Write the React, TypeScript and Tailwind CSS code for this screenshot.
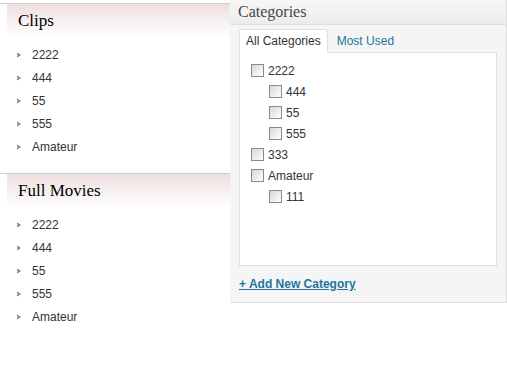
import React from "react";

const items = ["2222", "444", "55", "555", "Amateur"];

function Bullet() {
  return (
    <svg width="5" height="6" viewBox="0 0 5 6" className="shrink-0">
      <path d="M0 0.5 L4 3 L0 5.5 Z" fill="#7a7a7a" />
      <path d="M0 2 L1.6 3 L0 4 Z" fill="#d6d6d6" />
    </svg>
  );
}

function Section({ title, first }: { title: string; first?: boolean }) {
  return (
    <div className={first ? "mt-[3px] border-t border-[#cfcfcf]" : "border-t border-[#cfcfcf]"}>
      <div className="ml-[7px] h-[33px] flex items-center pl-[11px] bg-gradient-to-b from-[#eedfdf] to-[#ffffff] text-[17px] text-black" style={{ fontFamily: '"Liberation Serif", serif' }}>
        {title}
      </div>
      <ul className="pt-[6px] pb-[15px]">
        {items.map((t) => (
          <li key={t} className="h-[23px] flex items-center pl-[17px]">
            <Bullet />
            <span className="ml-[10px] text-[12px] text-[#333]">{t}</span>
          </li>
        ))}
      </ul>
    </div>
  );
}

function Check({ label, indent }: { label: string; indent?: boolean }) {
  return (
    <div className={"h-[21px] flex items-center " + (indent ? "pl-[29px]" : "pl-[11px]")}>
      <span className="w-[13px] h-[13px] border border-[#8a8a8a] bg-gradient-to-br from-[#d8d8d8] to-[#ffffff] shrink-0" />
      <span className="ml-[4px] text-[12px] text-[#333]">{label}</span>
    </div>
  );
}

export default function App() {
  return (
    <div className="w-[507px] h-[379px] bg-white flex items-start" style={{ fontFamily: '"Liberation Sans", Arial, sans-serif' }}>
      <div className="w-[230px] shrink-0">
        <Section title="Clips" first />
        <Section title="Full Movies" />
      </div>
      <div className="w-[277px] h-[303px] bg-[#f5f5f5] border-b border-r border-[#dfdfdf]">
        <div className="h-[25px] border-b border-[#dfdfdf] bg-gradient-to-b from-[#f7f7f7] to-[#ececec] flex items-center pl-[8px] text-[16px] text-[#464646]" style={{ fontFamily: '"Liberation Serif", serif' }}>
          Categories
        </div>
        <div className="pl-[9px] pr-[9px] pt-[4px]">
          <div className="flex items-end">
            <div className="h-[24px] px-[6px] flex items-center bg-white border border-[#dfdfdf] border-b-white rounded-t-[3px] -mb-px relative z-10 text-[12px] text-[#333]">
              All Categories
            </div>
            <div className="h-[23px] ml-[3px] px-[6px] flex items-center text-[12px] text-[#21759b]">Most Used</div>
          </div>
          <div className="h-[214px] bg-white border border-[#dfdfdf] pt-[7px]">
            <Check label="2222" />
            <Check label="444" indent />
            <Check label="55" indent />
            <Check label="555" indent />
            <Check label="333" />
            <Check label="Amateur" />
            <Check label="111" indent />
          </div>
          <div className="mt-[11px] text-[12px] font-bold text-[#21759b] underline leading-[14px]">+ Add New Category</div>
        </div>
      </div>
    </div>
  );
}
